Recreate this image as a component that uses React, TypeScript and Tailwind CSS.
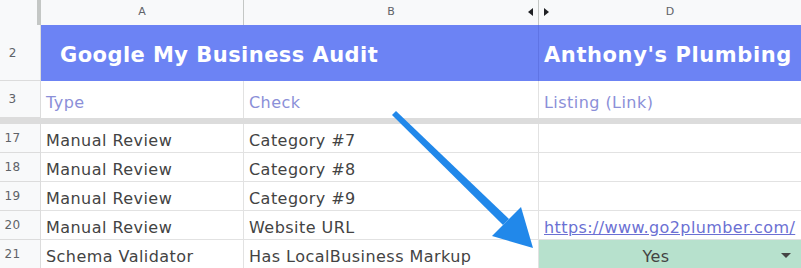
const font = "font-['DejaVu_Sans',sans-serif]";

const rows = [
  { n: "17", a: "Manual Review", b: "Category #7", d: null },
  { n: "18", a: "Manual Review", b: "Category #8", d: null },
  { n: "19", a: "Manual Review", b: "Category #9", d: null },
  { n: "20", a: "Manual Review", b: "Website URL", d: "link" },
  { n: "21", a: "Schema Validator", b: "Has LocalBusiness Markup", d: "yes" },
];

function RowNum({ n, h }: { n: string; h: string }) {
  return (
    <div
      className={`w-[41px] ${h} shrink-0 bg-[#f8f9fa] border-r border-b border-[#dcdcdc] flex items-center text-[12px] text-[#5f6368]`}
    >
      <span className="w-[25px] text-center">{n}</span>
    </div>
  );
}

function Arrow() {
  return (
    <svg className="absolute left-0 top-0 pointer-events-none" width="801" height="268">
      <polygon points="392,115 396,111 509,219 503,225" fill="#2188ea" />
      <polygon points="492,236 521,207 533,248" fill="#2188ea" />
    </svg>
  );
}

export default function App() {
  return (
    <div className={`relative w-[801px] h-[268px] overflow-hidden bg-white ${font}`}>
      {/* column headers */}
      <div className="flex h-[25px] bg-[#f8f9fa] text-[11px] text-[#5f6368]">
        <div className="w-[41px] shrink-0 flex justify-end">
          <div className="w-[4px] h-full bg-[#c4c7c5]" />
        </div>
        <div className="w-[203px] shrink-0 border-r border-[#c4c7c5] flex items-center justify-center">A</div>
        <div className="w-[295px] shrink-0 border-r border-[#c4c7c5] flex items-center justify-center relative">
          B
          <span className="absolute right-[5px] top-[8px] w-0 h-0 border-t-[4px] border-b-[4px] border-r-[5px] border-t-transparent border-b-transparent border-r-[#202124]" />
        </div>
        <div className="flex-1 flex items-center justify-center relative">
          <span className="absolute left-[5px] top-[8px] w-0 h-0 border-t-[4px] border-b-[4px] border-l-[5px] border-t-transparent border-b-transparent border-l-[#202124]" />
          D
        </div>
      </div>

      {/* row 2 title */}
      <div className="flex h-[56px]">
        <RowNum n="2" h="h-[56px]" />
        <div className="w-[498px] shrink-0 bg-[#6c83f4] border-r border-[#5f74e4] flex items-center pt-[5px] pl-[19px] text-white font-bold text-[21px] tracking-[0.45px]">
          Google My Business Audit
        </div>
        <div className="flex-1 bg-[#6c83f4] flex items-center pt-[5px] pl-[5px] text-white font-bold text-[21px] tracking-[0.6px] whitespace-nowrap">
          Anthony's Plumbing
        </div>
      </div>

      {/* row 3 subheads */}
      <div className="flex h-[37px] text-[16px] tracking-[0.45px] text-[#8b8fd8]">
        <RowNum n="3" h="h-[37px]" />
        <div className="w-[203px] shrink-0 border-r border-[#e2e2e2] flex items-end pb-[3px] pl-[5px]">Type</div>
        <div className="w-[295px] shrink-0 border-r border-[#e2e2e2] flex items-end pb-[3px] pl-[5px]">Check</div>
        <div className="flex-1 flex items-end pb-[3px] pl-[5px]">Listing (Link)</div>
      </div>

      {/* freeze bar */}
      <div className="h-[6px] bg-[#dcdcdc]" />

      {rows.map((r) => (
        <div key={r.n} className="flex h-[29px] text-[16px] leading-[20px] tracking-[0.45px] text-[#434343]">
          <RowNum n={r.n} h="h-[29px]" />
          <div className="w-[203px] shrink-0 border-r border-b border-[#e2e2e2] flex items-end pb-[1px] pl-[5px] whitespace-nowrap">
            {r.a}
          </div>
          <div className="w-[295px] shrink-0 border-r border-b border-[#e2e2e2] flex items-end pb-[1px] pl-[5px] whitespace-nowrap">
            {r.b}
          </div>
          {r.d === "yes" ? (
            <div className="flex-1 bg-[#b7e1cd] border-b border-[#e2e2e2] flex items-end pb-[1px] relative">
              <span className="w-full text-center pr-[28px]">Yes</span>
              <span className="absolute right-[10px] top-[13px] w-0 h-0 border-l-[5px] border-r-[5px] border-t-[5px] border-l-transparent border-r-transparent border-t-[#444]" />
            </div>
          ) : r.d === "link" ? (
            <div className="flex-1 border-b border-[#e2e2e2] flex items-end pb-[1px] pl-[5px] whitespace-nowrap text-[#6b70d3] underline tracking-[0.4px]">
              https://www.go2plumber.com/
            </div>
          ) : (
            <div className="flex-1 border-b border-[#e2e2e2]" />
          )}
        </div>
      ))}

      <Arrow />
    </div>
  );
}
